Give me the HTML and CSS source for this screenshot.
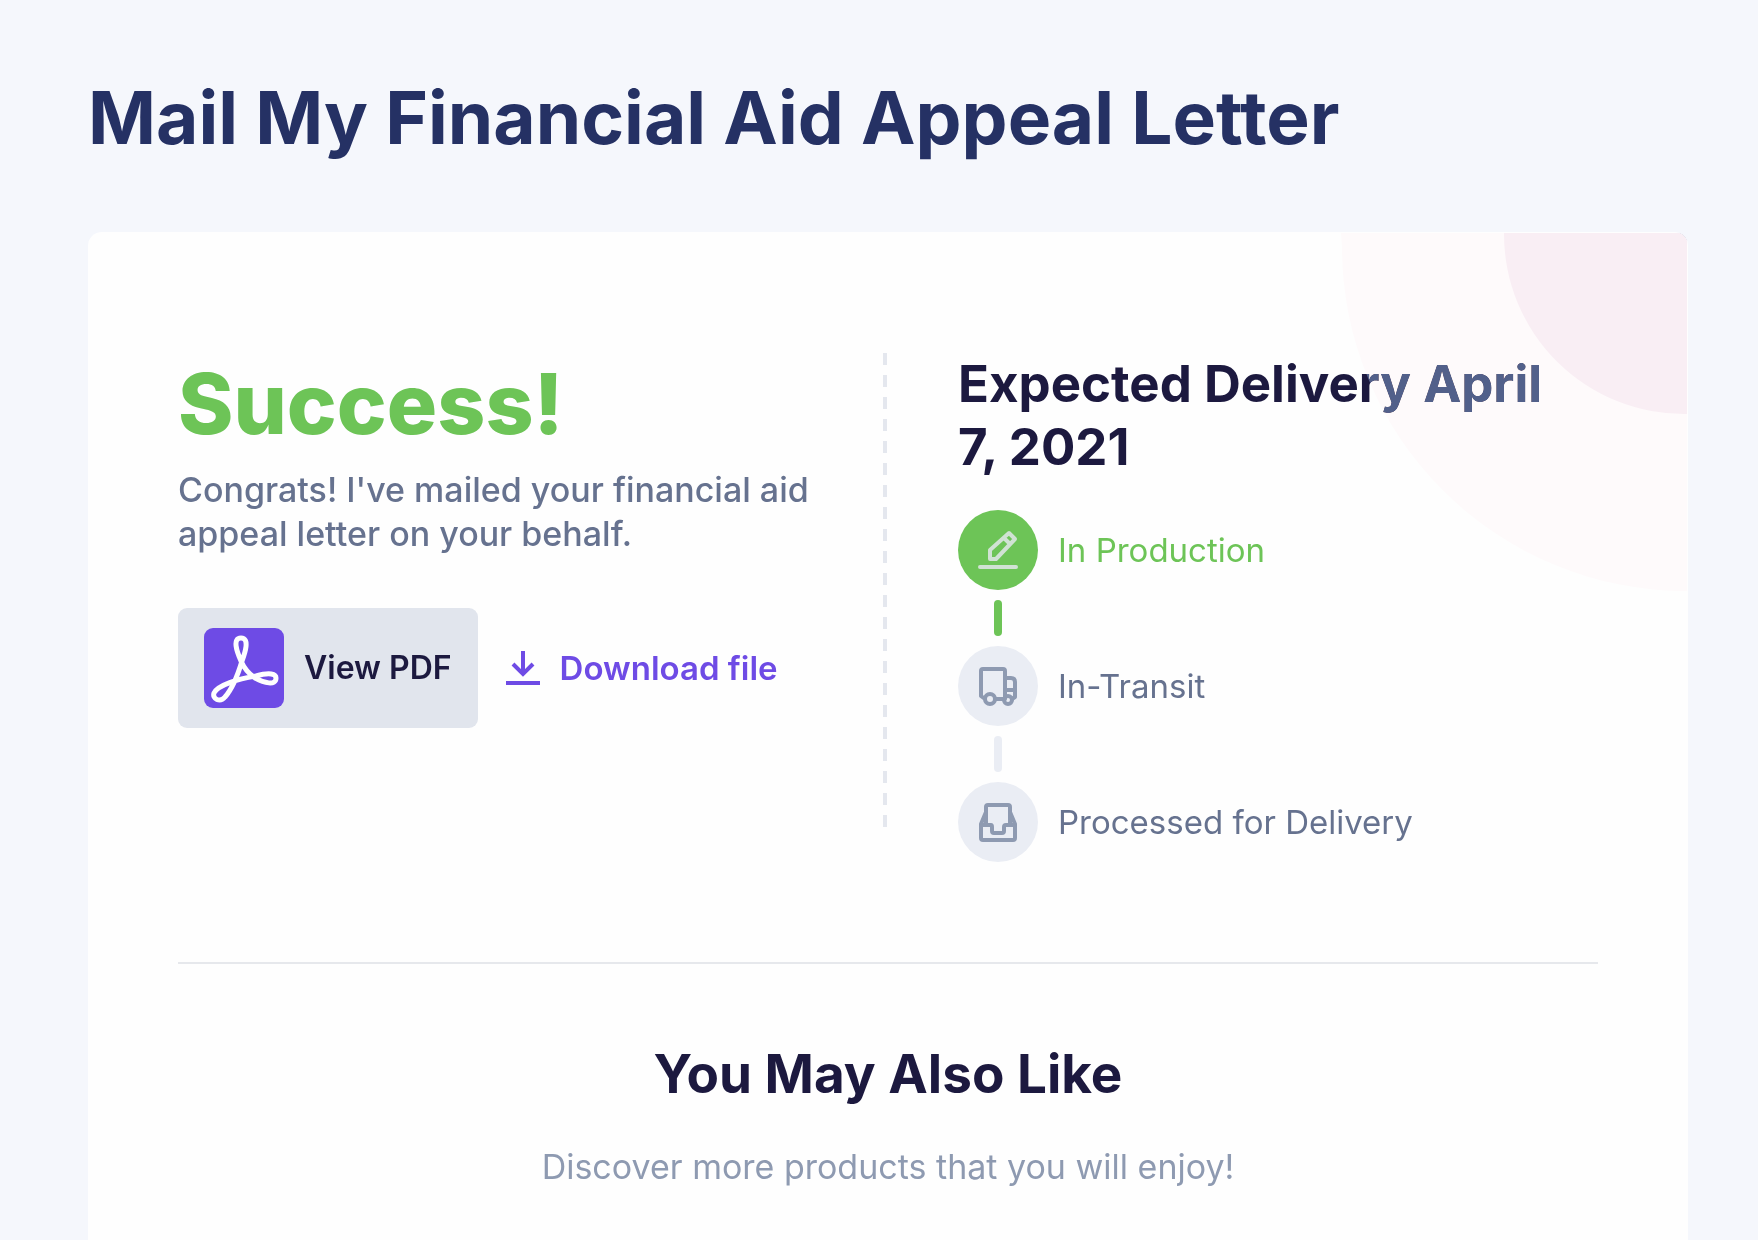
FILE: index.html
```html
<!DOCTYPE html>
<html lang="en">
<head>
<meta charset="utf-8">
<title>Mail My Financial Aid Appeal Letter</title>
<link rel="stylesheet" href="styles.css">
</head>
<body>
<main class="page">
  <h1 class="page-title">Mail My Financial Aid Appeal Letter</h1>
  <section class="card">
    <svg class="card-art" viewBox="0 0 346 358" aria-hidden="true">
      <path class="art-outer" d="M0 0H346V358A344 344 0 0 1 1 14Z"/>
      <path class="art-inner" d="M163 0H346V181A180 180 0 0 1 163 0Z"/>
    </svg>
    <div class="summary">
      <div class="result">
        <h2 class="result-title">Success!</h2>
        <p class="result-text">Congrats! I've mailed your financial aid appeal letter on your behalf.</p>
        <div class="actions">
          <button class="view-pdf" type="button">
            <svg class="pdf-icon" viewBox="0 0 80 80" aria-hidden="true">
              <rect width="80" height="80" rx="9"/>
              <path d="M37 33C33 24 28 10 37 10C46 10 41 25 38 33C35 43 30 59 21 69C16 75 8 71 10 65C14 57 34 51 52 48C66 44 72 46 72 50C72 58 60 55 51 50C45 46 40 40 37 33Z"/>
            </svg>
            View PDF
          </button>
          <a class="download" href="#download">
            <svg class="download-icon" viewBox="0 0 34 34" aria-hidden="true">
              <path d="M17 0V22M7 13L17 23L27 13M0 32H34"/>
            </svg>
            Download file
          </a>
        </div>
      </div>
      <div class="separator"></div>
      <div class="delivery">
        <h2 class="delivery-title">Expected Delivery April 7, 2021</h2>
        <ol class="steps">
          <li class="step step-active">
            <span class="step-icon"><svg viewBox="0 0 40 40" aria-hidden="true"><path d="M12 20L31 3L37 9L18 29H12ZM26 8L32 14M2 37H38"/></svg></span>
            In Production
          </li>
          <li class="step">
            <span class="step-icon"><svg viewBox="0 0 40 40" aria-hidden="true"><path d="M7 33L3 30V5Q3 3 5 3H25Q27 3 27 5V33H17M27 12H33Q37 12 37 16V31L34 33M27 24H37"/><circle cx="12" cy="33" r="5"/><circle cx="30" cy="34" r="4"/></svg></span>
            In-Transit
          </li>
          <li class="step">
            <span class="step-icon"><svg viewBox="0 0 40 40" aria-hidden="true"><path d="M8 23V5Q8 3 10 3H30Q32 3 32 5V23M8 10L3 22V36Q3 38 5 38H35Q37 38 37 36V22L32 10M3 23H13Q14 23 14 25V29Q14 31 16 31H24Q26 31 26 29V25Q26 23 28 23H37"/></svg></span>
            Processed for Delivery
          </li>
        </ol>
      </div>
    </div>
    <div class="suggestions">
      <h2 class="suggestions-title">You May Also Like</h2>
      <p class="suggestions-text">Discover more products that you will enjoy!</p>
    </div>
    <svg class="card-art card-veil" viewBox="0 0 346 358" aria-hidden="true">
      <path d="M0 0H346V358A344 344 0 0 1 1 14Z"/>
    </svg>
  </section>
</main>
</body>
</html>
```
FILE: styles.css
```css
* { box-sizing: border-box; }

body {
  margin: 0;
  background: #f5f7fc;
  color: #1c193f;
  font-family: Inter, "Open Sans", sans-serif;
}

h1, h2, p, ol { margin: 0; padding: 0; }

.page {
  display: flex;
  flex-direction: column;
  min-height: 100vh;
  padding: 72px 70px 0 88px;
}

.page-title {
  color: #253164;
  font-size: 73px;
  line-height: 92px;
  font-weight: 700;
}

.card {
  position: relative;
  isolation: isolate;
  flex: 1;
  margin-top: 68px;
  padding: 120px 90px 40px;
  background: #fefefe;
  border-radius: 14px 14px 0 0;
  overflow: hidden;
}

.card-art {
  position: absolute;
  z-index: -1;
  top: 1px;
  right: 1px;
  width: 346px;
  pointer-events: none;
}

.art-outer { fill: #fefafb; }
.art-inner { fill: #f9eef4; }

/* Lightens the part of the heading that crosses the large circle */
.card-veil {
  z-index: 1;
  fill: #52608a;
  mix-blend-mode: lighten;
}

.summary {
  display: grid;
  grid-template-columns: 1fr 4px 640px;
  column-gap: 71px;
  align-items: start;
  padding-bottom: 100px;
  border-bottom: 2px solid #e6e8ec;
}

.result-title {
  color: #6dc457;
  font-size: 84px;
  line-height: 104px;
  font-weight: 800;
}

.result-text {
  margin-top: 12px;
  color: #66728f;
  font-size: 34px;
  line-height: 44px;
  font-weight: 500;
}

.actions {
  display: flex;
  align-items: center;
  gap: 28px;
  margin-top: 52px;
}

.view-pdf {
  display: flex;
  align-items: center;
  gap: 20px;
  height: 120px;
  padding: 0 26px;
  border: 0;
  border-radius: 9px;
  background: #e1e5ed;
  color: #1c193f;
  font: 600 32px/44px Inter, "Open Sans", sans-serif;
  white-space: nowrap;
}

.pdf-icon { width: 80px; height: 80px; fill: #6e4be5; }
.pdf-icon path { fill: none; stroke: #fefefe; stroke-width: 5; }

.download {
  display: flex;
  align-items: center;
  gap: 20px;
  color: #6e4be5;
  font-size: 33px;
  line-height: 44px;
  font-weight: 600;
  text-decoration: none;
  white-space: nowrap;
}

.download-icon { width: 34px; height: 34px; fill: none; stroke: #6e4be5; stroke-width: 4; }

.separator {
  height: 474px;
  margin-top: 1px;
  background: repeating-linear-gradient(#e4e7ee 0 12px, transparent 12px 22px);
}

.delivery-title {
  padding-right: 20px;
  font-size: 51px;
  line-height: 63px;
  font-weight: 700;
}

.steps { margin-top: 32px; list-style: none; }

.step {
  position: relative;
  display: flex;
  align-items: center;
  gap: 20px;
  color: #66728f;
  font-size: 33px;
  line-height: 44px;
}

.step + .step { margin-top: 56px; }

.step + .step::before {
  content: "";
  position: absolute;
  left: 36px;
  top: -46px;
  width: 8px;
  height: 36px;
  border-radius: 4px;
  background: #eaedf4;
}

.step-active + .step::before { background: #6dc457; }

.step-icon {
  display: grid;
  place-items: center;
  width: 80px;
  height: 80px;
  border-radius: 50%;
  background: #eaedf4;
}

.step-icon svg {
  width: 40px;
  height: 40px;
  fill: none;
  stroke: #8e9ab1;
  stroke-width: 4;
  stroke-linejoin: round;
}

.step-active { color: #6dc457; }
.step-active .step-icon { background: #6dc457; }
.step-active .step-icon svg { stroke: #d0e2d3; stroke-linecap: round; }

.suggestions { padding-top: 78px; text-align: center; }

.suggestions-title { font-size: 53px; line-height: 64px; font-weight: 700; }

.suggestions-text {
  margin-top: 39px;
  color: #8e9ab1;
  font-size: 34px;
  line-height: 44px;
}
```
